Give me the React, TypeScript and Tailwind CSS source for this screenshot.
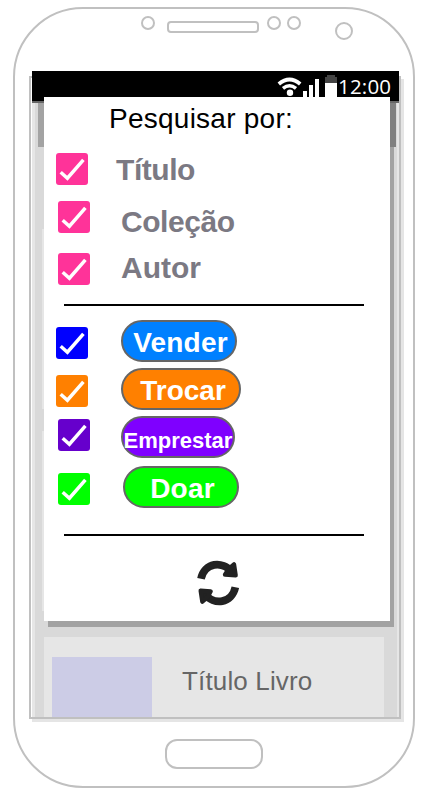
type Filter = {
  label: string;
  row: string;
  box: string;
  text: string;
};

const fields: Filter[] = [
  { label: 'Título', row: 'mt-2 pl-3', box: 'bg-[#ff3399]', text: 'ml-7 mt-px tracking-[-0.45px]' },
  { label: 'Coleção', row: 'mt-4 pl-3.5', box: 'bg-[#ff3399]', text: 'ml-[31px] mt-[5px] tracking-[-0.45px]' },
  { label: 'Autor', row: 'mt-5 pl-3.5', box: 'bg-[#ff3399]', text: 'ml-[31px] -mt-px' },
];

const actions: Filter[] = [
  { label: 'Vender', row: 'mt-3.5 pl-3', box: 'mt-[7px] bg-[#0000ff]', text: 'ml-[33px] w-[116px] bg-[#0080ff] pl-[3px] pt-[5px] text-[28px] tracking-[0.2px]' },
  { label: 'Trocar', row: 'mt-1.5 pl-3', box: 'mt-[7px] bg-[#ff8000]', text: 'ml-[33px] w-[120px] bg-[#ff8000] pl-1 pt-[5px] text-[28px]' },
  { label: 'Emprestar', row: 'mt-1.5 pl-3.5', box: 'mt-[3px] bg-[#6600cc]', text: 'ml-[31px] w-[114px] bg-[#7f00ff] pt-[9px] text-[22px]' },
  { label: 'Doar', row: 'mt-2 pl-3.5', box: 'mt-[7px] bg-[#00ff00]', text: 'ml-[33px] w-[116px] bg-[#00ff00] pl-[3px] pt-[5px] text-[28px] tracking-[0.2px]' },
];

function Check({ className }: { className: string }) {
  return (
    <div className={`size-8 shrink-0 rounded-[3px] ${className}`}>
      <svg viewBox="0 0 32 32" className="size-8" fill="none" stroke="#fff" strokeWidth="3.5">
        <path d="M4.7 19.2 11.4 25.2 27.4 6.9" />
      </svg>
    </div>
  );
}

function StatusBar() {
  return (
    <div className="relative z-10 -mt-[7px] flex h-8 w-[367px] items-start border-b-2 border-[#666] bg-black pl-[245px]">
      <svg viewBox="0 0 62 26" className="h-[26px] w-[62px]" fill="none">
        <path d="M1.8 13Q12.5 4 23.2 13" stroke="#fff" strokeWidth="3.8" />
        <path d="M6 17.4Q12.5 12 19 17.4" stroke="#fff" strokeWidth="3.4" />
        <circle cx="13" cy="21.7" r="3.2" fill="#fff" />
        <path d="M26 20h4v6h-4zM32 14h4v12h-4zM38 8h4v18h-4zM48 12h12v14H48z" fill="#fff" />
        <path d="M50 4h8v2h2v6H48V6h2z" fill="#444" />
      </svg>
      <span className="-ml-[1px] mt-[3px] font-['Open_Sans',sans-serif] text-[20.5px] font-medium leading-6 tracking-[0.2px] text-white">12:00</span>
    </div>
  );
}

function Dialog() {
  return (
    <div className="absolute left-[13px] top-[19px] z-20 h-[524px] w-[346px] bg-white">
      <h1 className="pl-[65px] pt-1.5 text-[28px] leading-8 tracking-[0.25px] text-black">Pesquisar por:</h1>
      <div className="pt-2.5">
        {fields.map((f) => (
          <div key={f.label} className={`flex h-8 items-start ${f.row}`}>
            <Check className={f.box} />
            <span className={`text-[30px] font-bold leading-8 text-[#7b7983] ${f.text}`}>{f.label}</span>
          </div>
        ))}
      </div>
      <div className="ml-5 mt-[19px] h-0.5 w-[300px] bg-black" />
      {actions.map((a) => (
        <div key={a.label} className={`flex h-[42px] items-start ${a.row}`}>
          <Check className={a.box} />
          <button className={`flex h-[42px] items-center justify-center whitespace-nowrap rounded-full border-2 border-[#666] font-bold leading-8 text-white ${a.text}`}>
            {a.label}
          </button>
        </div>
      ))}
      <div className="ml-5 mt-[26px] h-0.5 w-[300px] bg-black" />
      <svg viewBox="105 115 150 150" className="ml-[151px] mt-[22px] size-[50px]" fill="none" stroke="#222" strokeWidth="23">
        <path d="M123 177C133 129 187 121 216 158" />
        <path d="M226 203C216 251 162 259 133 222" />
        <path d="M222 134 227 167 195 165 206 148Z" fill="#222" strokeWidth="13" strokeLinejoin="round" />
        <path d="M127 246 122 213 152 215 143 232Z" fill="#222" strokeWidth="13" strokeLinejoin="round" />
      </svg>
    </div>
  );
}

function Screen() {
  return (
    <div className="relative ml-[14px] h-[643px] w-[372px] border-2 border-[#c0c0c0] bg-white pl-px shadow-[3px_3px_0_#e5e5e5]">
      <StatusBar />
      <div className="h-[614px] w-[367px] bg-[#e6e6e6] pl-[3px]">
        <div className="flex h-[614px] w-[362px] flex-col overflow-hidden bg-[#d9d9d9]">
          <div className="ml-[3px] h-[44px] w-[358px] shrink-0 bg-[#a3a3a3]" />
          <div className="ml-[7px] mt-[82px] h-[180px] w-[342px] shrink-0 bg-[#e6e6e6]" />
          <div className="ml-[7px] mt-[22px] h-[180px] w-[342px] shrink-0 bg-[#e6e6e6]" />
          <div className="ml-[9px] mt-[26px] flex h-20 w-[340px] shrink-0 items-start bg-[#e6e6e6] pl-2 pt-5">
            <div className="h-[60px] w-[100px] bg-[#cccce6]" />
            <span className="ml-[30px] mt-2 text-[26px] leading-8 tracking-[0.15px] text-[#666]">Título Livro</span>
          </div>
        </div>
      </div>
      <div className="absolute left-[17px] top-[25px] z-10 h-[524px] w-[346px] bg-black/25" />
      <div className="absolute left-[359px] top-[25px] z-10 h-[44px] w-1.5 bg-[#808080]" />
      <Dialog />
    </div>
  );
}

export default function App() {
  return (
    <main className="h-[795px] w-[430px] overflow-hidden bg-white pl-[13px] pt-[6.5px] font-['Liberation_Sans',Arial,sans-serif]">
      <div className="h-[781px] w-[402px] rounded-[70px] border-2 border-[#c0c0c0] bg-white">
        <div className="flex h-[67px] items-start pl-[126px] pt-[7.5px]">
          <div className="size-3.5 rounded-full border-2 border-[#c0c0c0]" />
          <div className="ml-3 mt-[4.5px] h-3 w-[92px] rounded border-2 border-[#c0c0c0]" />
          <div className="ml-2 size-3.5 rounded-full border-2 border-[#c0c0c0]" />
          <div className="ml-1.5 size-3.5 rounded-full border-2 border-[#c0c0c0]" />
          <div className="ml-[34px] mt-1.5 size-[18px] rounded-full border-2 border-[#c0c0c0]" />
        </div>
        <Screen />
        <div className="ml-[150px] mt-5 h-[30px] w-[98px] rounded-xl border-2 border-[#c0c0c0]" />
      </div>
    </main>
  );
}
